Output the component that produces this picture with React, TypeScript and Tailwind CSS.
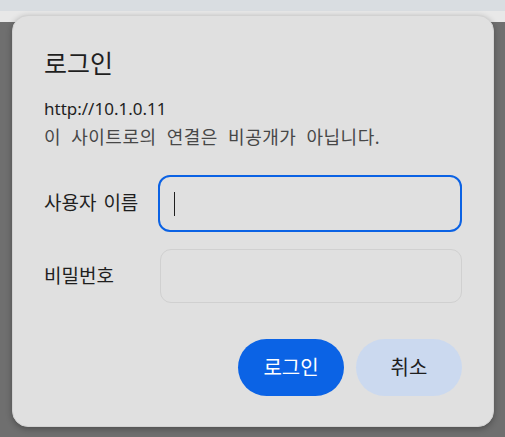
import React from "react";

const FONT = {
  fontFamily: '"Noto Sans", "Noto Sans CJK KR", sans-serif',
};

export default function App() {
  return (
    <div className="relative h-[437px] w-full overflow-hidden bg-[#6f6f6f]" style={FONT}>
      <div className="h-[11px] bg-[#d9dde1]" />
      <div className="h-[11px] bg-[#e8e8e8]" />

      {/* login dialog */}
      <div className="absolute left-[12px] top-[15px] flex h-[412px] w-[482px] flex-col rounded-[16px] border border-[#d2d2d2] bg-[#e0e0e0] px-[31px] pt-[30px] shadow-[0_2px_6px_rgba(0,0,0,0.3)]">
        <h1 className="text-[25px] leading-[34px] text-[#1f1f1f]">로그인</h1>

        <div className="mt-[15px] leading-[28px]">
          <div className="text-[17px] text-[#1f1f1f]">http://10.1.0.11</div>
          <div className="text-[18px] tracking-[0.5px] text-[#474747] [word-spacing:5px]">
            이 사이트로의 연결은 비공개가 아닙니다.
          </div>
        </div>

        <div className="mt-[24px] flex items-center">
          <label className="w-[115px] text-[19px] text-[#1f1f1f] [word-spacing:2px]">사용자 이름</label>
          <div className="flex h-[57px] w-[306px] items-center rounded-[12px] border-2 border-[#0b62e4] px-[14px]">
            <div className="h-[24px] w-px bg-[#1f1f1f]" />
          </div>
        </div>

        <div className="mt-[17px] flex items-center">
          <label className="w-[116px] text-[19px] text-[#1f1f1f]">비밀번호</label>
          <div className="h-[54px] w-[303px] rounded-[11px] border border-[#d0d0d0]" />
        </div>

        <div className="mt-[36px] flex justify-end gap-[12px]">
          <button className="h-[57px] w-[106px] rounded-full bg-[#0b63e5] text-[20px] text-white">
            로그인
          </button>
          <button className="h-[57px] w-[106px] rounded-full bg-[#cbd9ef] text-[20px] text-[#1f1f1f]">
            취소
          </button>
        </div>
      </div>
    </div>
  );
}
